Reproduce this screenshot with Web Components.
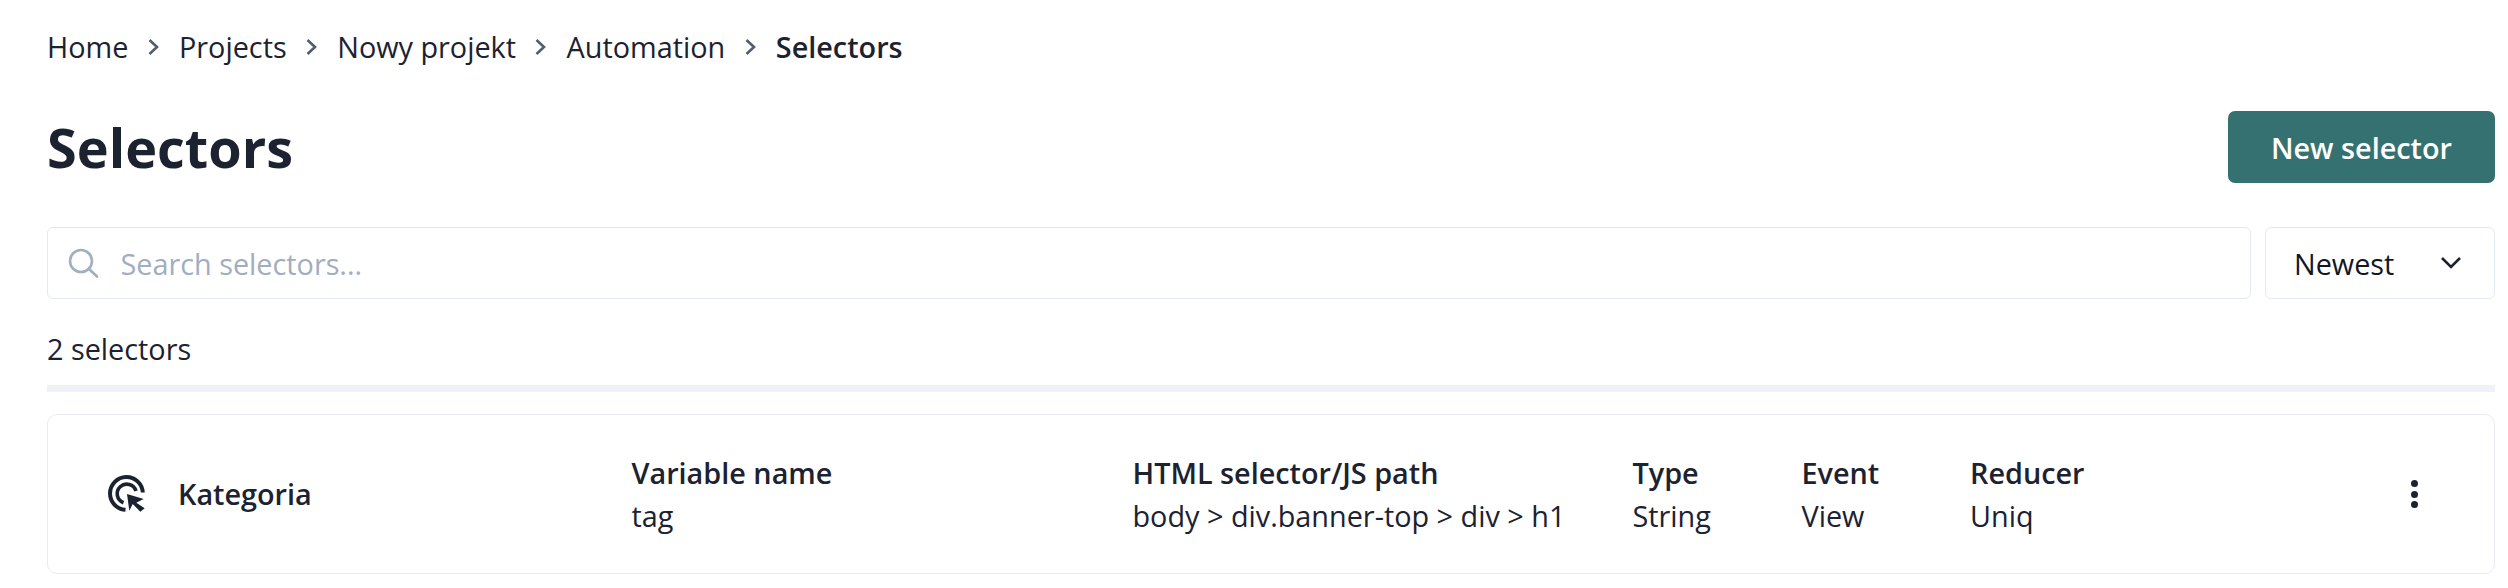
<!DOCTYPE html>
<html>
<head>
<meta charset="utf-8">
<title>Selectors</title>
<style>
  html, body { margin: 0; background: #fff; }
  body { font-family: "Open Sans", sans-serif; color: #1c2230; }
</style>
</head>
<body>
<selectors-page>
  <bread-crumbs slot="crumbs" items="Home,Projects,Nowy projekt,Automation,Selectors"></bread-crumbs>
  <page-header slot="header" title="Selectors" action="New selector"></page-header>
  <search-bar slot="search" placeholder="Search selectors..." sort="Newest"></search-bar>
  <span slot="count">2 selectors</span>
  <selector-card slot="list" name="Kategoria">
    <selector-field label="Variable name" value="tag"></selector-field>
    <selector-field label="HTML selector/JS path" value="body > div.banner-top > div > h1"></selector-field>
    <selector-field label="Type" value="String"></selector-field>
    <selector-field label="Event" value="View"></selector-field>
    <selector-field label="Reducer" value="Uniq"></selector-field>
  </selector-card>
</selectors-page>

<script>
// Page shell, only puts the sections under each other
class SelectorsPage extends HTMLElement {
  constructor() {
    super();
    this.attachShadow({mode: "open"});
    this.shadowRoot.innerHTML = `
      <style>
      :host { display: flex; flex-direction: column; height: 588px; overflow: hidden; padding: 25px 13px 0 47px; box-sizing: border-box; font-size: 28.8px; }
      .count { line-height: 40px; margin-top: 30px; color: #1c2230; }
      hr { border: 0; height: 7px; background: #f0f0f7; margin: 16px 0 22px; }
      </style>
      <slot name="crumbs"></slot>
      <slot name="header"></slot>
      <slot name="search"></slot>
      <div class="count"><slot name="count"></slot></div>
      <hr>
      <slot name="list"></slot>
    `;
  }
}

class BreadCrumbs extends HTMLElement {
  constructor() {
    super();
    this.attachShadow({mode: "open"});
  }
  connectedCallback() {
    const items = this.getAttribute("items").split(",");
    const chevron = `<svg width="16" height="24" viewBox="0 0 16 24" fill="none" stroke="#535d72" stroke-width="2.6"><path d="M3.5 5l7.5 7-7.5 7"/></svg>`;
    this.shadowRoot.innerHTML = `
      <style>
      :host { display: flex; align-items: center; gap: 17.3px; font-size: 28.8px; line-height: 44px; color: #1c2230; }
      b { font-weight: 600; }
      svg { display: block; }
      </style>
      ${items.map((t, i) => i == items.length - 1 ? `<b>${t}</b>` : `<span>${t}</span>${chevron}`).join("")}
    `;
  }
}

class PageHeader extends HTMLElement {
  constructor() {
    super();
    this.attachShadow({mode: "open"});
  }
  connectedCallback() {
    this.shadowRoot.innerHTML = `
      <style>
      :host { display: flex; align-items: center; justify-content: space-between; margin-top: 42px; }
      h1 { margin: 0; font-size: 54px; line-height: 72px; font-weight: 700; color: #1c2230; }
      button { all: unset; box-sizing: border-box; width: 267px; height: 72px; display: flex; align-items: center; justify-content: center; background: #357171; color: #fff; border-radius: 7px; font-size: 28.8px; font-weight: 600; }
      </style>
      <h1>${this.getAttribute("title")}</h1>
      <button>${this.getAttribute("action")}</button>
    `;
  }
}

class SearchBar extends HTMLElement {
  constructor() {
    super();
    this.attachShadow({mode: "open"});
  }
  connectedCallback() {
    this.shadowRoot.innerHTML = `
      <style>
      :host { display: flex; gap: 14px; margin-top: 44px; font-size: 28.8px; }
      .box { box-sizing: border-box; height: 72px; display: flex; align-items: center; background: #fff; border: 1.6px solid #e4e8f0; border-radius: 6px; }
      .search { flex: 1; padding-left: 19.5px; color: #a0aec0; gap: 22px; }
      .sort { width: 230px; padding: 0 33.5px 0 28px; justify-content: space-between; color: #14161f; }
      svg { display: block; }
      </style>
      <div class="box search">
        <svg width="31" height="30" viewBox="0 0 31 30" fill="none" stroke="#a0aec0" stroke-width="2.6" stroke-linecap="round"><circle cx="13" cy="13" r="11"/><path d="M21 21l8 7.5"/></svg>
        <span>${this.getAttribute("placeholder")}</span>
      </div>
      <div class="box sort">
        <span>${this.getAttribute("sort")}</span>
        <svg width="20" height="12" viewBox="0 0 20 12" fill="none" stroke="#1c2230" stroke-width="2.6"><path d="M1 1l9 9 9-9"/></svg>
      </div>
    `;
  }
}

class SelectorCard extends HTMLElement {
  constructor() {
    super();
    this.attachShadow({mode: "open"});
  }
  connectedCallback() {
    this.shadowRoot.innerHTML = `
      <style>
      :host { display: flex; align-items: center; box-sizing: border-box; height: 160px; background: #fff; border: 1.6px solid #e8ebf2; border-radius: 10px; padding-left: 60px; }
      .name { display: flex; align-items: center; gap: 32px; width: 523.5px; flex: none; font-size: 28.8px; font-weight: 600; color: #1c2230; }
      .name span { margin-top: -2px; }
      .fields { display: grid; grid-template-columns: 501px 500px 169px 168.5px 1fr; flex: 1; }
      .more { flex: none; margin-right: 76px; display: flex; flex-direction: column; gap: 3.5px; }
      .more i { width: 7px; height: 7px; border-radius: 50%; background: #1c2230; display: block; }
      svg { display: block; }
      </style>
      <div class="name">
        <svg width="38" height="38" viewBox="0 0 38 38" fill="none" stroke="#1c2230" stroke-linecap="butt">
          <path stroke-width="4" d="M17.5 34.8A16.4 16.4 0 1 1 34.8 17.5"/>
          <path stroke-width="3.6" d="M15.5 27.8A9.6 9.6 0 1 1 28 16"/>
          <path fill="#1c2230" stroke="none" d="M19 19l16.7 5-7.4 3.7 8.4 5.6-4.4 3.4-7.6-7.7-3.4 6.7z"/>
        </svg>
        <span>${this.getAttribute("name")}</span>
      </div>
      <div class="fields"><slot></slot></div>
      <div class="more"><i></i><i></i><i></i></div>
    `;
  }
}

class SelectorField extends HTMLElement {
  constructor() {
    super();
    this.attachShadow({mode: "open"});
  }
  connectedCallback() {
    this.shadowRoot.innerHTML = `
      <style>
      :host { display: block; font-size: 28.8px; line-height: 43px; color: #1c2230; }
      b { display: block; font-weight: 600; }
      span { display: block; }
      </style>
      <b></b><span></span>
    `;
    this.shadowRoot.querySelector("b").textContent = this.getAttribute("label");
    this.shadowRoot.querySelector("span").textContent = this.getAttribute("value");
  }
}

customElements.define("selectors-page", SelectorsPage);
customElements.define("bread-crumbs", BreadCrumbs);
customElements.define("page-header", PageHeader);
customElements.define("search-bar", SearchBar);
customElements.define("selector-card", SelectorCard);
customElements.define("selector-field", SelectorField);
</script>
</body>
</html>
